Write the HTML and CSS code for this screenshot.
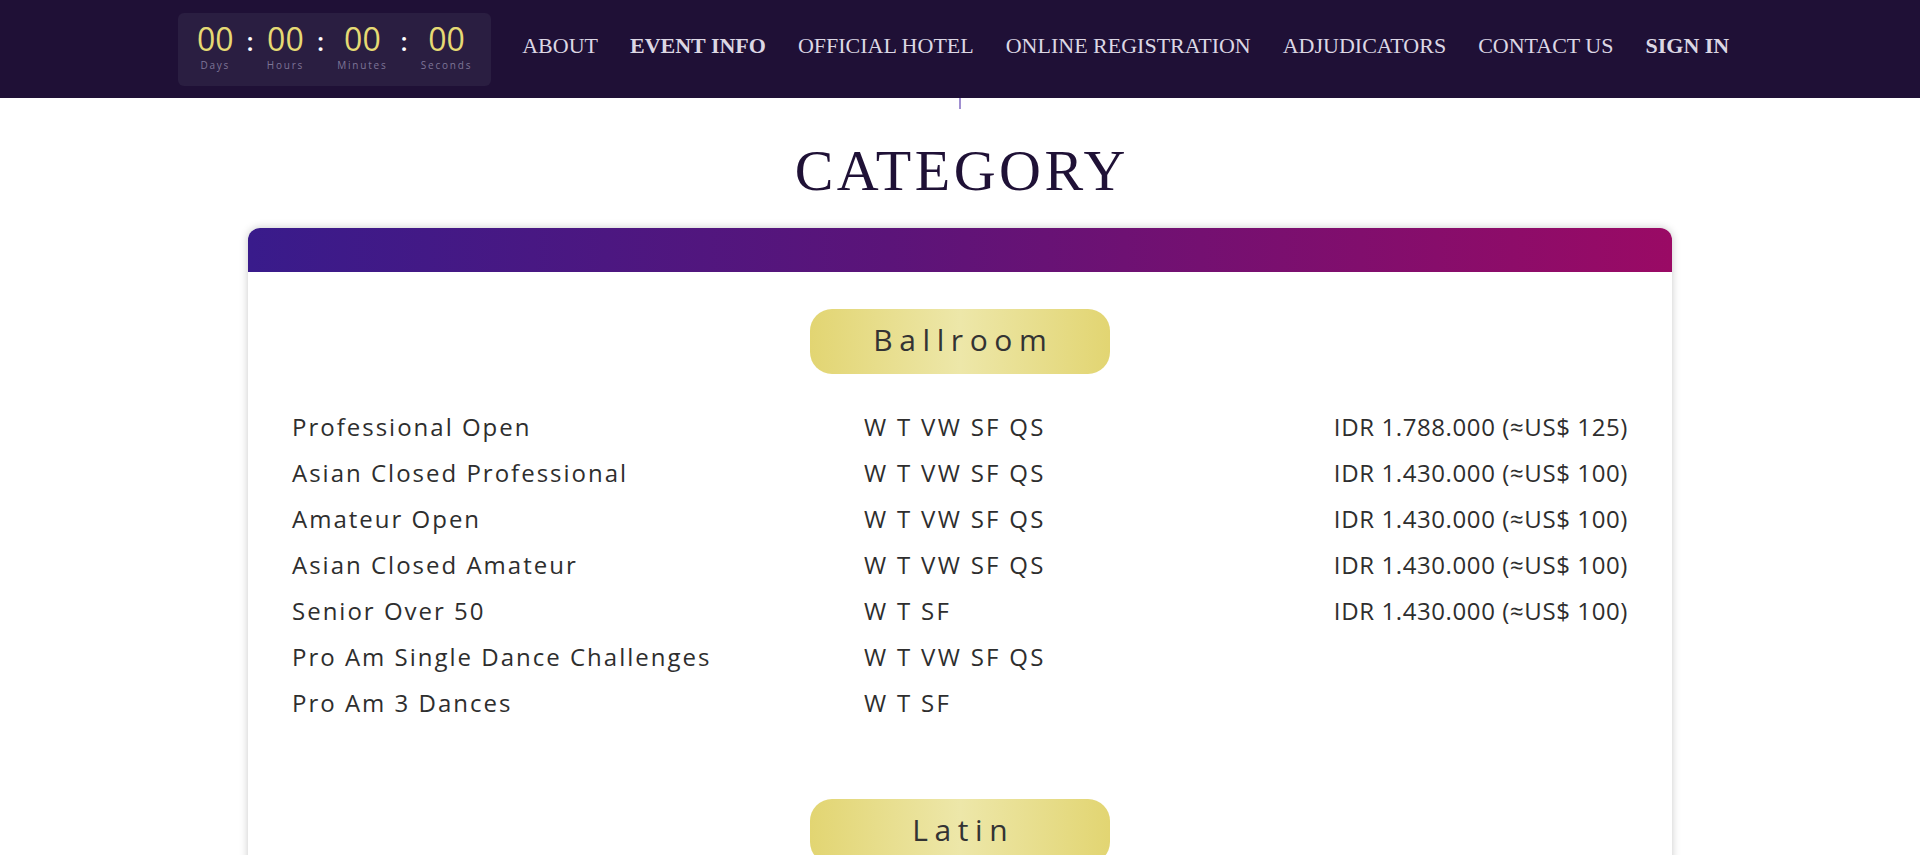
FILE: index.html
```html
<!DOCTYPE html>
<html lang="en">
<head>
<meta charset="utf-8">
<title>Category</title>
<link rel="stylesheet" href="styles.css">
</head>
<body>
<header class="topbar">
  <div class="countdown">
    <div class="unit"><span class="num">00</span><span class="lbl">Days</span></div>
    <span class="sep">:</span>
    <div class="unit"><span class="num">00</span><span class="lbl">Hours</span></div>
    <span class="sep">:</span>
    <div class="unit"><span class="num">00</span><span class="lbl">Minutes</span></div>
    <span class="sep">:</span>
    <div class="unit"><span class="num">00</span><span class="lbl">Seconds</span></div>
  </div>
  <nav class="menu">
    <a href="#">ABOUT</a>
    <a href="#" class="strong">EVENT INFO</a>
    <a href="#">OFFICIAL HOTEL</a>
    <a href="#">ONLINE REGISTRATION</a>
    <a href="#">ADJUDICATORS</a>
    <a href="#">CONTACT US</a>
    <a href="#" class="strong">SIGN IN</a>
  </nav>
</header>
<div class="tick"></div>
<main class="page">
  <h1 class="title">CATEGORY</h1>
  <section class="card">
    <div class="card-bar"></div>
    <div class="card-body">
      <div class="group">
        <div class="pill">Ballroom</div>
        <div class="rows">
          <span>Professional Open</span><span class="dances">W T VW SF QS</span><span class="fee">IDR 1.788.000 (≈US$ 125)</span>
          <span>Asian Closed Professional</span><span class="dances">W T VW SF QS</span><span class="fee">IDR 1.430.000 (≈US$ 100)</span>
          <span>Amateur Open</span><span class="dances">W T VW SF QS</span><span class="fee">IDR 1.430.000 (≈US$ 100)</span>
          <span>Asian Closed Amateur</span><span class="dances">W T VW SF QS</span><span class="fee">IDR 1.430.000 (≈US$ 100)</span>
          <span>Senior Over 50</span><span class="dances">W T SF</span><span class="fee">IDR 1.430.000 (≈US$ 100)</span>
          <span>Pro Am Single Dance Challenges</span><span class="dances">W T VW SF QS</span><span class="fee"></span>
          <span>Pro Am 3 Dances</span><span class="dances">W T SF</span><span class="fee"></span>
        </div>
      </div>
      <div class="group">
        <div class="pill">Latin</div>
      </div>
    </div>
  </section>
</main>
</body>
</html>
```

FILE: styles.css
```css
html { overflow: hidden; }
body {
  margin: 0;
  background: #ffffff;
  font-family: "Open Sans", "Noto Sans", sans-serif;
  color: #2e2e2e;
}

.topbar {
  height: 98px;
  background: #1f1036;
  display: flex;
  align-items: flex-start;
  padding-left: 178px;
  box-sizing: border-box;
}

.countdown {
  margin-top: 13px;
  height: 73px;
  box-sizing: border-box;
  padding: 9px 19px 0 19px;
  background: #2a1e41;
  border-radius: 6px;
  display: flex;
  align-items: flex-start;
}

.unit {
  display: flex;
  flex-direction: column;
  align-items: center;
}

.num {
  font-size: 32px;
  line-height: 33px;
  color: #e6da74;
  font-weight: 500;
}

.lbl {
  margin-top: 5px;
  font-size: 10px;
  line-height: 11px;
  letter-spacing: 1.8px;
  color: #7e7597;
}

.sep {
  margin: 3px 13px 0;
  font-size: 26px;
  line-height: 33px;
  color: #ffffff;
  font-weight: 600;
}

.menu {
  margin-left: 31px;
  margin-top: 34px;
  display: flex;
  gap: 32px;
}

.menu a {
  font-family: "Liberation Serif", "Times New Roman", serif;
  font-size: 22px;
  line-height: 24px;
  color: #dcd7e4;
  text-decoration: none;
}

.menu a.strong { font-weight: bold; }

.tick {
  width: 2px;
  height: 11px;
  margin-left: 959px;
  background: #a08fd0;
}

.title {
  margin: 33px 0 0;
  padding-left: 3.5px;
  text-align: center;
  font-family: "Liberation Serif", "Times New Roman", serif;
  font-weight: normal;
  font-size: 58px;
  line-height: 58px;
  letter-spacing: 3.5px;
  color: #1f1136;
}

.card {
  width: 1424px;
  margin: 28px auto 0;
  background: #ffffff;
  border-radius: 12px 12px 0 0;
  box-shadow: 0 0 9px rgba(0, 0, 0, 0.22);
}

.card-bar {
  height: 44px;
  border-radius: 12px 12px 0 0;
  background: linear-gradient(90deg, #391b8b 0%, #5b1479 45%, #9a0a65 100%);
}

.card-body {
  padding: 0 44px;
}

.group {
  padding-top: 37px;
  padding-bottom: 36px;
}

.pill {
  width: 300px;
  height: 65px;
  margin: 0 auto;
  border-radius: 22px;
  background: linear-gradient(90deg, #e2d572 0%, #ede7a9 50%, #e2d572 100%);
  display: flex;
  align-items: center;
  justify-content: center;
  font-size: 30px;
  font-weight: 500;
  letter-spacing: 6.6px;
  padding: 0 0 5px 6.6px;
  box-sizing: border-box;
  color: #333333;
}

.rows {
  margin-top: 30px;
  display: grid;
  grid-template-columns: 572px 1fr auto;
  font-size: 24px;
  line-height: 46px;
  letter-spacing: 2px;
  font-weight: 500;
}

.rows .dances {
  letter-spacing: 2.3px;
}

.rows .fee {
  text-align: right;
  letter-spacing: 0.6px;
}
```
